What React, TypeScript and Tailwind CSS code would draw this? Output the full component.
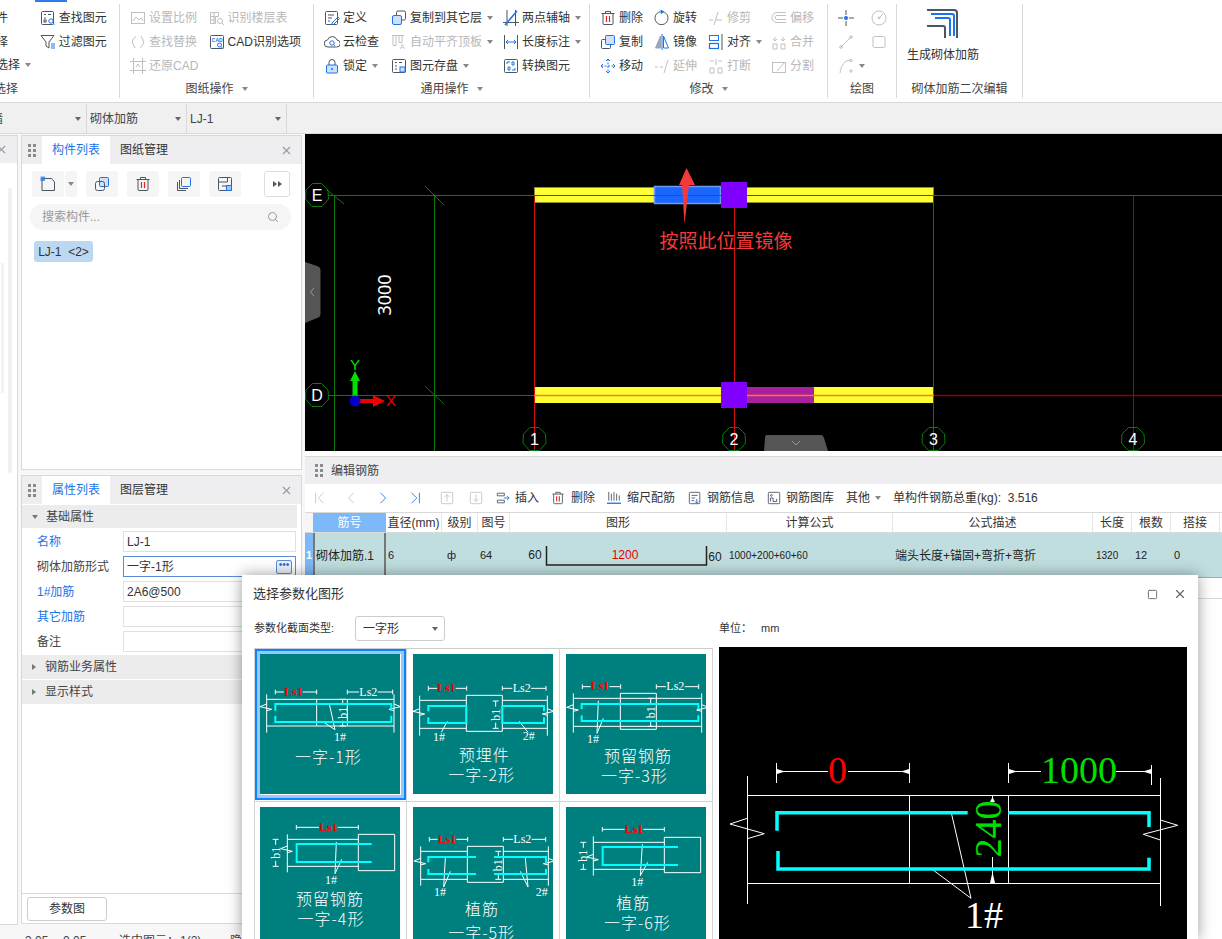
import React from 'react';
import { X, Search, Square } from 'lucide-react';

const B = '#1a73e8';

function Caret({ dark }: { dark?: boolean }) {
  return <span className={`inline-block w-0 h-0 border-x-[3px] border-x-transparent border-t-[4px] ${dark ? 'border-t-[#666]' : 'border-t-[#888]'}`} />;
}

function Svg({ children, s = 16 }: { children: React.ReactNode; s?: number }) {
  return (
    <svg width={s} height={s} viewBox="0 0 16 16" fill="none" stroke="currentColor" strokeWidth="1" className="shrink-0">
      {children}
    </svg>
  );
}

const icons: Record<string, React.ReactNode> = {
  find: <><rect x="1.5" y="1.5" width="12" height="13" rx="1" /><path d="M4 4.5h2M8 4.5h3M4 8h2" /><rect x="4" y="10" width="2" height="2" /><circle cx="11" cy="11" r="2.2" stroke={B} /><path d="M12.6 12.6l2 2" stroke={B} /></>,
  filter: <><path d="M1 1.5h13L9 8v6l-3-2V8z" /><path d="M11 10h4M11 12h4M11 14h4" stroke={B} /></>,
  scale: <><rect x="1.5" y="2.5" width="13" height="11" /><path d="M3 11l3-4 3 3 2-2 2 3" /></>,
  table: <><path d="M1.5 2.5h8v4h-3v7h-5zM5 2.5v11M1.5 6.5h5M1.5 10h5" /><circle cx="11" cy="11" r="2.5" /><path d="M13 13l2 2" /></>,
  replace: <><path d="M3 10a5.5 5.5 0 0 1 3-7.5M13 6a5.5 5.5 0 0 1-3 7.5" /><path d="M5 14l-2-4M11 2l2 4" /></>,
  cad: <><rect x="1.5" y="1.5" width="13" height="13" rx="1" /><text x="2.8" y="7.5" fontSize="5" fill={B} stroke="none" fontWeight="700">CAD</text><circle cx="10.5" cy="11" r="2" stroke={B} /><path d="M12 12.5l2 2" stroke={B} /></>,
  crop: <><path d="M3.5 0v16M12.5 0v16M0 3.5h16M0 12.5h16" /><path d="M6 9l2-3 2 3" /></>,
  define: <><rect x="1.5" y="1.5" width="12" height="13" rx="1" /><path d="M4 5h6M4 8h4M4 11h2" /><path d="M8 13l6-6 1.5 1.5-6 6H8z" stroke={B} /></>,
  cloud: <><path d="M4 13a3.5 3.5 0 0 1-.5-7 5 5 0 0 1 9.5 0 3.5 3.5 0 0 1-.5 7z" /><circle cx="8" cy="9" r="2.2" stroke={B} /><path d="M9.5 10.5l1.5 1.5" stroke={B} /></>,
  lock: <><path d="M5 7V4.5a3 3 0 0 1 6 0V7" /><rect x="2.5" y="7" width="11" height="8" rx="1" fill="#cfe0f8" stroke={B} /><circle cx="8" cy="11" r="1" fill={B} stroke="none" /></>,
  layer: <><rect x="5.5" y="1" width="9" height="9" rx="1.5" /><rect x="1.5" y="5.5" width="9" height="9" rx="1.5" fill="#cfe0f8" stroke={B} /></>,
  level: <><path d="M2 1.5v10h3v-10M8 1.5v7h3v-7M1 1.5h12" /><text x="9" y="15" fontSize="7" stroke="none" fill="currentColor">A</text></>,
  save: <><rect x="1.5" y="1.5" width="13" height="13" rx="1" /><path d="M4 4.5h2M8 4.5h3M4 8h2M4 11h2" /><rect x="9" y="9" width="5" height="5" fill="#cfe0f8" stroke={B} /></>,
  axis: <><path d="M4 0v16M0 12.5h16M12.5 0v16" /><path d="M2 15L14 1" stroke={B} strokeWidth="1.5" /></>,
  measure: <><path d="M1.5 1v14M14.5 1v14" /><path d="M3 8h10M5 6L3 8l2 2M11 6l2 2-2 2" stroke={B} /></>,
  convert: <><rect x="1.5" y="1.5" width="13" height="13" rx="1" /><path d="M4 6V4h3M12 10v2H9M5 9h2v3H5zM9 4h2v3H9z" stroke={B} /></>,
  del: <><path d="M1.5 3.5h13M5.5 3.5V1.5h5v2" /><path d="M3 3.5v10a1 1 0 0 0 1 1h8a1 1 0 0 0 1-1v-10" /><path d="M6.5 6v6M9.5 6v6" stroke="#e02020" strokeWidth="1.2" /></>,
  rotate: <><path d="M9 1.8a6.5 6.5 0 1 1-3 0" /><path d="M7 0l2.5 1.8L7 3.5z" fill={B} stroke={B} /></>,
  trim: <><path d="M1 10h4M8 10h6M10 2L6 15" /></>,
  offset: <><path d="M15 2.5H6a5 5 0 0 0 0 10h9" /><path d="M15 5.5H6a2 2 0 0 0 0 4h9" /></>,
  copy: <><rect x="5.5" y="1.5" width="9" height="9" rx="1" fill="#cfe0f8" stroke={B} /><path d="M5 5.5H2.5a1 1 0 0 0-1 1v7a1 1 0 0 0 1 1h7a1 1 0 0 0 1-1V11" /></>,
  mirror: <><path d="M6.5 2L1.5 14h5z" fill="#9aa6b8" stroke="#9aa6b8" /><path d="M9.5 2l5 12h-5z" stroke={B} /><path d="M8 0v16" stroke={B} /></>,
  align: <><rect x="1.5" y="1.5" width="9" height="5" stroke={B} /><rect x="1.5" y="9.5" width="9" height="5" stroke={B} strokeWidth="1.2" /><path d="M14 0v16" /></>,
  merge: <><path d="M2 10h4v5H2zM10 10h4v5h-4zM4 7V3M12 7V3M2 5l2 2 2-2M10 5l2 2 2-2" /></>,
  move: <><path d="M8 1v14M1 8h14" strokeDasharray="2 1.5" stroke={B} /><path d="M6 3l2-2 2 2M6 13l2 2 2-2M3 6L1 8l2 2M13 6l2 2-2 2" stroke={B} /></>,
  extend: <><path d="M1 9h3M6 9h3M14 2l-4 13" /></>,
  brk: <><path d="M2 10h4v5H2zM10 10h4v5h-4zM2 3h4M10 3h4M8 1v6" /></>,
  split: <><rect x="1.5" y="4.5" width="13" height="10" /><path d="M6 13l8-9" /></>,
  point: <><path d="M8 0v5M8 11v5M0 8h5M11 8h5" /><circle cx="8" cy="8" r="2" fill={B} stroke="none" /></>,
  circle: <><circle cx="8" cy="8" r="7" /><circle cx="8" cy="8" r="1" /><path d="M8.5 7.5L12 4" /></>,
  line: <><path d="M3 13L13 3" /><circle cx="3" cy="13" r="1.3" /><circle cx="13" cy="3" r="1.3" /></>,
  rect: <><rect x="2" y="2.5" width="12" height="11" rx="1.5" /></>,
  arc: <><path d="M2 15C3 7 7 2 13 2" /><circle cx="13" cy="2.5" r="1.2" /><circle cx="13" cy="13" r="1.2" /></>,
  newdoc: <><path d="M2 2.5h9.5L14.5 6v8.5h-12.5z" /><rect x="0.5" y="0.5" width="4.5" height="4.5" fill={B} stroke="none" opacity="0.7" /></>,
  copy2: <><rect x="5.5" y="1.5" width="9" height="9" rx="1" fill="#cfe0f8" stroke={B} /><rect x="1.5" y="5.5" width="9" height="9" rx="2" /></>,
  stack: <><rect x="5.5" y="1.5" width="9" height="9" rx="1" stroke={B} /><path d="M3.5 4v8.5H12M1.5 6v8.5H10" /></>,
  disk: <><rect x="1.5" y="1.5" width="13" height="13" rx="1" /><path d="M1.5 6h9M10.5 1.5V6M5 10h6" /><rect x="9.5" y="9.5" width="5" height="5" fill="#9fc3f2" stroke={B} /></>,
  first: <><path d="M3 2v12M12 2L6 8l6 6" /></>,
  prev: <><path d="M10 2L4 8l6 6" /></>,
  next: <><path d="M5 2l6 6-6 6" /></>,
  last: <><path d="M4 2l6 6-6 6M13 2v12" /></>,
  up: <><rect x="1.5" y="1.5" width="13" height="13" rx="1" /><path d="M8 12V4M5 7l3-3 3 3" /></>,
  down: <><rect x="1.5" y="1.5" width="13" height="13" rx="1" /><path d="M8 4v8M5 9l3 3 3-3" /></>,
  insert: <><path d="M1.5 2.5h8v3h-8zM1.5 10.5h8v3h-8z" /><path d="M9 8h6M12.5 5.5L15 8l-2.5 2.5" stroke={B} /></>,
  ruler: <><path d="M2 1v10M5 3v8M8 1v10M11 3v8M14 5v6" /><path d="M0 14h16" stroke={B} strokeWidth="1.5" /></>,
  info: <><rect x="1.5" y="1.5" width="12" height="13" rx="1" /><path d="M4 5h7M4 8h4M4 11h3" /><path d="M10 9v5M8 12l2 2 2-2" stroke={B} /></>,
  lib: <><rect x="1.5" y="1.5" width="13" height="13" rx="1" /><path d="M4 12V8h3v4M7 12h4V9" /><circle cx="5" cy="5" r="1" /></>,
};

function Tool({ icon, label, caret, off }: { icon: string; label?: string; caret?: boolean; off?: boolean }) {
  return (
    <div className={`flex items-center h-6 gap-[3px] text-xs whitespace-nowrap ${off ? 'text-[#b8b8b8]' : 'text-[#333]'}`}>
      <span className={off ? 'text-[#c0c0c0]' : 'text-[#4b5563]'}><Svg>{icons[icon]}</Svg></span>
      {label && <span>{label}</span>}
      {caret && <span className="ml-[2px] flex"><Caret /></span>}
    </div>
  );
}

function Group({ cls, label, caret, children }: { cls: string; label: string; caret?: boolean; children: React.ReactNode }) {
  return (
    <div className={`flex flex-col h-[94px] mt-[2px] border-r border-[#d9d9d9] ${cls}`}>
      <div className="h-[73px] pt-[2px] shrink-0">{children}</div>
      <div className="h-[24px] shrink-0 flex items-center justify-center gap-2 text-xs text-[#444]">
        <span>{label}</span>
        {caret && <Caret />}
      </div>
    </div>
  );
}

function Col({ w, children }: { w: string; children: React.ReactNode }) {
  return <div className={`flex flex-col ${w}`}>{children}</div>;
}

function Ribbon() {
  return (
    <div className="h-[102px] bg-white">
      <div className="h-[2px]"><div className="ml-[35px] w-[32px] h-[2px] bg-[#2b7de9]" /></div>
      <div className="flex">
        <div className="flex flex-col h-[94px] mt-[2px] w-[120px] border-r border-[#d9d9d9]">
          <div className="flex h-[73px] pt-[2px] shrink-0">
            <div className="w-[40px] flex flex-col text-xs text-[#333]">
              <div className="h-6 flex items-center -ml-[4px]">件</div>
              <div className="h-6 flex items-center -ml-[4px]">择</div>
              <div className="h-6 flex items-center -ml-[4px] gap-[5px]"><span>选择</span><Caret /></div>
            </div>
            <Col w="w-[80px]">
              <Tool icon="find" label="查找图元" />
              <Tool icon="filter" label="过滤图元" />
            </Col>
          </div>
          <div className="h-[24px] shrink-0 flex items-center -ml-[6px] text-xs text-[#444]">选择</div>
        </div>
        <Group cls="w-[194px]" label="图纸操作" caret>
          <div className="flex pl-[10px]">
            <Col w="w-[79px]">
              <Tool icon="scale" label="设置比例" off />
              <Tool icon="replace" label="查找替换" off />
              <Tool icon="crop" label="还原CAD" off />
            </Col>
            <Col w="w-[105px]">
              <Tool icon="table" label="识别楼层表" off />
              <Tool icon="cad" label="CAD识别选项" />
            </Col>
          </div>
        </Group>
        <Group cls="w-[276px]" label="通用操作" caret>
          <div className="flex pl-[10px]">
            <Col w="w-[67px]">
              <Tool icon="define" label="定义" />
              <Tool icon="cloud" label="云检查" />
              <Tool icon="lock" label="锁定" caret />
            </Col>
            <Col w="w-[112px]">
              <Tool icon="layer" label="复制到其它层" caret />
              <Tool icon="level" label="自动平齐顶板" caret off />
              <Tool icon="save" label="图元存盘" caret />
            </Col>
            <Col w="w-[85px]">
              <Tool icon="axis" label="两点辅轴" caret />
              <Tool icon="measure" label="长度标注" caret />
              <Tool icon="convert" label="转换图元" />
            </Col>
          </div>
        </Group>
        <Group cls="w-[238px]" label="修改" caret>
          <div className="flex pl-[10px]">
            <Col w="w-[54px]">
              <Tool icon="del" label="删除" />
              <Tool icon="copy" label="复制" />
              <Tool icon="move" label="移动" />
            </Col>
            <Col w="w-[54px]">
              <Tool icon="rotate" label="旋转" />
              <Tool icon="mirror" label="镜像" />
              <Tool icon="extend" label="延伸" off />
            </Col>
            <Col w="w-[63px]">
              <Tool icon="trim" label="修剪" off />
              <Tool icon="align" label="对齐" caret />
              <Tool icon="brk" label="打断" off />
            </Col>
            <Col w="w-[55px]">
              <Tool icon="offset" label="偏移" off />
              <Tool icon="merge" label="合并" off />
              <Tool icon="split" label="分割" off />
            </Col>
          </div>
        </Group>
        <Group cls="w-[69px]" label="绘图">
          <div className="flex pl-[10px]">
            <Col w="w-[33px]">
              <Tool icon="point" />
              <Tool icon="line" off />
              <Tool icon="arc" caret off />
            </Col>
            <Col w="w-[20px]">
              <Tool icon="circle" off />
              <Tool icon="rect" off />
            </Col>
          </div>
        </Group>
        <Group cls="w-[126px]" label="砌体加筋二次编辑">
          <div className="flex flex-col items-center w-[72px] ml-[10px]">
            <svg width="32" height="30" viewBox="0 0 32 30" fill="none" className="mt-[2px] shrink-0">
              <path d="M0 2h27a3 3 0 0 1 3 3v25" stroke="#4b5563" strokeWidth="2" />
              <path d="M4 6h21a2 2 0 0 1 2 2v20M8 10h13a2 2 0 0 1 2 2v16" stroke={B} strokeWidth="2" />
              <path d="M0 18h16a2 2 0 0 1 2 2v10" stroke="#4b5563" strokeWidth="2" />
            </svg>
            <div className="mt-[9px] text-xs text-[#333] whitespace-nowrap">生成砌体加筋</div>
          </div>
        </Group>
      </div>
    </div>
  );
}

function Toolbar() {
  return (
    <div className="h-[32px] pt-px flex bg-[#f0f0f0] border-y border-[#d9d9d9] text-xs text-[#444]">
      <div className="w-[87px] flex items-center justify-between pr-[5px] border-r border-[#d9d9d9]"><span className="-ml-[9px]">墙</span><Caret dark /></div>
      <div className="w-[100px] flex items-center justify-between pl-[3px] pr-[5px] border-r border-[#d9d9d9]"><span>砌体加筋</span><Caret dark /></div>
      <div className="w-[100px] flex items-center justify-between pl-[3px] pr-[5px] border-r border-[#d9d9d9]"><span>LJ-1</span><Caret dark /></div>
    </div>
  );
}

function Grip() {
  return (
    <div className="grid grid-cols-2 gap-[2px] w-[8px]">
      {[0, 1, 2, 3, 4, 5].map((i) => <span key={i} className="w-[3px] h-[3px] bg-[#8a8a8a]" />)}
    </div>
  );
}

function PanelHead({ a, b }: { a: string; b: string }) {
  return (
    <div className="h-[28px] flex items-stretch bg-[#eeeef0] text-xs">
      <div className="w-[20px] flex items-center justify-center"><Grip /></div>
      <div className="w-[68px] bg-white flex items-center justify-center text-[#1a73e8]">{a}</div>
      <div className="ml-[10px] flex items-center text-[#333]">{b}</div>
      <div className="ml-auto pr-[8px] flex items-center text-[#999]"><X size={13} /></div>
    </div>
  );
}

function SqBtn({ icon, cls }: { icon: string; cls: string }) {
  return <div className={`h-[26px] bg-[#f5f5f5] rounded-[3px] flex items-center justify-center text-[#4b5563] ${cls}`}><Svg>{icons[icon]}</Svg></div>;
}

function ListPanel() {
  return (
    <div className="h-[335px] mt-px border border-[#d9d9d9] bg-white">
      <PanelHead a="构件列表" b="图纸管理" />
      <div className="flex items-center mt-[7px] ml-[10px]">
        <SqBtn icon="newdoc" cls="w-[32px]" />
        <div className="ml-px w-[12px] h-[26px] bg-[#f5f5f5] rounded-[3px] flex items-center justify-center"><Caret /></div>
        <SqBtn icon="copy2" cls="w-[32px] ml-[9px]" />
        <SqBtn icon="del" cls="w-[32px] ml-[9px]" />
        <SqBtn icon="stack" cls="w-[32px] ml-[9px]" />
        <SqBtn icon="disk" cls="w-[32px] ml-[9px]" />
        <div className="w-[26px] h-[26px] ml-[23px] border border-[#ddd] rounded-[3px] flex items-center justify-center">
          <svg width="9" height="6" viewBox="0 0 9 6" fill="#555"><path d="M0 0l4 3-4 3zM5 0l4 3-4 3z" /></svg>
        </div>
      </div>
      <div className="mt-[7px] ml-[8px] w-[261px] h-[26px] rounded-full bg-[#f5f5f5] flex items-center justify-between px-[12px] text-xs text-[#999]">
        <span>搜索构件...</span>
        <Search size={12} />
      </div>
      <div className="mt-[11px] ml-[12px] w-[59px] h-[21px] rounded-[3px] bg-[#bcd7f2] flex items-center justify-center text-xs text-[#333] whitespace-pre">LJ-1  &lt;2&gt;</div>
    </div>
  );
}

function Section({ label, open }: { label: string; open?: boolean }) {
  return (
    <div className={`mb-px w-[275px] bg-[#ececec] flex items-center text-xs text-[#444] ${open ? 'h-[23px]' : 'h-[24px]'}`}>
      <span className={`ml-[10px] w-0 h-0 ${open ? 'border-x-[3px] border-x-transparent border-t-[4px] border-t-[#777]' : 'border-y-[3px] border-y-transparent border-l-[4px] border-l-[#777]'}`} />
      <span className={open ? 'ml-[8px]' : 'ml-[9px]'}>{label}</span>
    </div>
  );
}

function PropRow({ label, blue, value, active }: { label: string; blue?: boolean; value?: string; active?: boolean }) {
  return (
    <div className="h-[25px] w-[275px] flex items-center text-xs">
      <span className={`w-[101px] pl-[15px] ${blue ? 'text-[#1a73e8]' : 'text-[#444]'}`}>{label}</span>
      <div className={`w-[173px] h-[21px] flex items-center pl-[3px] pr-[3px] justify-between text-[#333] border ${active ? 'border-[#5b8bd8]' : 'border-[#e0e0e0]'}`}>
        <span>{value}</span>
        {active && <span className="w-[16px] h-[14px] rounded-[2px] border border-[#5b8bd8] bg-[#eaf2fc] text-[#2b6cc4] text-[10px] leading-[8px] flex justify-center">•••</span>}
      </div>
    </div>
  );
}

function PropPanel() {
  return (
    <div className="h-[449px] mt-[5px] border border-[#d9d9d9] bg-white flex flex-col">
      <PanelHead a="属性列表" b="图层管理" />
      <div className="mt-px">
        <Section label="基础属性" open />
        <PropRow label="名称" blue value="LJ-1" />
        <PropRow label="砌体加筋形式" value="一字-1形" active />
        <PropRow label="1#加筋" blue value="2A6@500" />
        <PropRow label="其它加筋" blue />
        <PropRow label="备注" />
        <div className="h-px" />
        <Section label="钢筋业务属性" />
        <Section label="显示样式" />
      </div>
      <div className="mt-auto h-[30px] border-t border-[#d9d9d9] flex items-start pt-[3px] pl-[5px]">
        <div className="w-[80px] h-[24px] border border-[#ccc] rounded-[3px] flex items-center justify-center text-xs text-[#333]">参数图</div>
      </div>
    </div>
  );
}

function LeftSide() {
  return (
    <div className="w-[305px] shrink-0 flex flex-col bg-[#f7f7f7]">
      <div className="flex h-[790px]">
        <div className="w-[18px] h-[790px] mt-px border-r border-b border-[#d9d9d9] bg-white flex flex-col">
          <div className="h-[28px] bg-[#eeeef0] border-t border-[#d9d9d9] flex items-center text-[#999] -ml-[5px]"><X size={13} className="shrink-0" /></div>
          <div className="flex gap-[4px] pl-px flex-1">
            <div className="w-[3px]"><div className="h-[130px] mt-[100px] bg-[#f3f3f3]" /></div>
            <div className="w-[4px] mt-[25px] h-[285px] bg-[#f0f0f0] rounded" />
          </div>
        </div>
        <div className="w-[281px] ml-[3px]">
          <ListPanel />
          <PropPanel />
        </div>
      </div>
      <div className="flex pt-[9px] pl-[25px] text-xs text-[#444] whitespace-nowrap">
        <span className="w-[38px]">3.05</span>
        <span className="w-[56px]">0.05</span>
        <span className="w-[61px]">选中图元：</span>
        <span className="w-[50px]">1(2)</span>
        <span>隐</span>
      </div>
    </div>
  );
}

function AxisMark({ x, y, s }: { x: number; y: number; s: string }) {
  return (
    <g>
      <polygon points={`${x - 4.5},${y - 11.5} ${x + 4.5},${y - 11.5} ${x + 11},${y - 5} ${x + 11.5},${y + 4} ${x + 5},${y + 11.5} ${x - 5},${y + 11.5} ${x - 11.5},${y + 4} ${x - 11},${y - 5}`} fill="none" stroke="#0a7a0a" />
      <text x={x} y={y + 6} textAnchor="middle" fontSize="16" fill="#fff" fontFamily="Liberation Sans">{s}</text>
    </g>
  );
}

function CadView() {
  return (
    <svg width="917" height="317" viewBox="0 0 917 317" className="block bg-black shrink-0">
      <path d="M29.5 61V317M129.5 61V317" stroke="#0a7a0a" />
      <path d="M23 61.5H229M23 261.5H229" stroke="#0a7a0a" />
      <path d="M22 56L39 70M120 52L139 71M120 252L139 270" stroke="#0a7a0a" />
      <rect x="229.5" y="53.5" width="399" height="15" fill="#ffff33" stroke="#8f8f2a" />
      <rect x="229" y="253" width="400" height="16" fill="#ffff33" />
      <rect x="349.5" y="52.5" width="66" height="17" fill="#1a66ff" stroke="#6f9cf0" strokeWidth="1.5" />
      <rect x="442" y="253" width="67" height="16" fill="#a81fa0" />
      <path d="M229.5 62V317M429.5 62V317M628.5 62V317" stroke="#d01010" />
      <path d="M828.5 62V317" stroke="#a80000" />
      <path d="M229 61.5H917" stroke="#e01010" />
      <path d="M629 261.5H917" stroke="#900000" strokeWidth="1.5" />
      <path d="M229 261.5H629" stroke="#ff7a1a" strokeWidth="1.5" />
      <rect x="416" y="48" width="26" height="26" fill="#8000ff" />
      <rect x="416" y="248" width="26" height="26" fill="#8000ff" />
      <polygon points="381.5,34 390,51 384,51 379.5,90 377,51 374,51" fill="#f33a3a" />
      <text x="421" y="114" textAnchor="middle" fontSize="19" fill="#f33a3a" fontFamily="Noto Sans CJK SC">按照此位置镜像</text>
      <text x="0" y="0" transform="translate(86 161) rotate(-90)" textAnchor="middle" fontSize="18" fill="#fff" fontFamily="Noto Sans">3000</text>
      <AxisMark x={12} y={61} s="E" />
      <AxisMark x={12} y={261} s="D" />
      <AxisMark x={229.5} y={305} s="1" />
      <AxisMark x={429} y={305} s="2" />
      <AxisMark x={628.5} y={305} s="3" />
      <AxisMark x={828} y={305} s="4" />
      <path d="M47.5 267V247H45L50 237L55 247H52.5V267z" fill="#00e000" />
      <path d="M50 265H68V261L80 267L68 273V269H50z" fill="#f00000" />
      <circle cx="50" cy="267" r="5.5" fill="#0000c8" />
      <text x="50" y="236" textAnchor="middle" fontSize="15" fill="#00e000" fontFamily="Liberation Sans">Y</text>
      <text x="86" y="272" textAnchor="middle" fontSize="15" fill="#f00000" fontFamily="Liberation Sans">X</text>
      <path d="M0 128L12 132Q15.5 133 15.5 136V180Q15.5 183 12 184L0 189z" fill="#555" />
      <path d="M9 154L5.5 158L9 162" stroke="#999" fill="none" />
      <path d="M462 301H516Q518 301 519 304L523 317H459L460 304Q460 301 462 301z" fill="#555" />
      <path d="M487 307L491 311L495 307" stroke="#999" fill="none" />
    </svg>
  );
}

function Nav({ icon, blue, off, cls }: { icon: string; blue?: boolean; off?: boolean; cls: string }) {
  return <span className={`${blue ? 'text-[#1a73e8]' : off ? 'text-[#c4c4c4]' : 'text-[#4b5563]'} ${cls}`}><Svg s={14}>{icons[icon]}</Svg></span>;
}

function RebarBar() {
  return (
    <div className="h-[28px] flex items-center text-xs text-[#333] whitespace-nowrap pl-[8px]">
      <Nav icon="first" off cls="" />
      <Nav icon="prev" off cls="ml-[18px]" />
      <Nav icon="next" blue cls="ml-[17px]" />
      <Nav icon="last" blue cls="ml-[18px]" />
      <Nav icon="up" off cls="ml-[18px]" />
      <Nav icon="down" off cls="ml-[15px]" />
      <Nav icon="insert" cls="ml-[13px]" />
      <span className="ml-[5px]">插入</span>
      <Nav icon="del" cls="ml-[12px]" />
      <span className="ml-[6px]">删除</span>
      <Nav icon="ruler" cls="ml-[12px]" />
      <span className="ml-[6px]">缩尺配筋</span>
      <Nav icon="info" cls="ml-[13px]" />
      <span className="ml-[5px]">钢筋信息</span>
      <Nav icon="lib" cls="ml-[12px]" />
      <span className="ml-[5px]">钢筋图库</span>
      <span className="ml-[12px]">其他</span>
      <span className="ml-[5px] flex"><Caret /></span>
      <span className="ml-[12px] whitespace-pre">单构件钢筋总重(kg):  3.516</span>
    </div>
  );
}

const cols = 'grid grid-cols-[8px_73px_56px_36px_32px_217px_166px_200px_39px_39px_49px_2px]';
const headCells = ['直径(mm)', '级别', '图号', '图形', '计算公式', '公式描述', '长度', '根数', '搭接'];

function RebarTable() {
  return (
    <div className="text-xs text-[#333]">
      <div className={`${cols} h-[21px] border-y border-[#d9d9d9]`}>
        <div className="bg-[#f5f5f5]" />
        <div className="bg-[#7db8f8] text-white flex items-center justify-center">筋号</div>
        {headCells.map((h) => <div key={h} className="flex items-center justify-center border-r border-[#e6e6e6] whitespace-nowrap">{h}</div>)}
        <div />
      </div>
      <div className={`${cols} h-[45px] bg-[#c0dedf] border-b border-[#aaa] text-[#222]`}>
        <div className="bg-[#7db8f8] text-white font-bold flex items-center justify-center text-[11px]">1</div>
        <div className="border-x-2 border-[#777] flex items-center pl-px whitespace-nowrap">砌体加筋.1</div>
        <div className="flex items-center pl-[2px] text-[11px]">6</div>
        <div className="flex items-center pl-[5px] text-[11px]">ф</div>
        <div className="flex items-center pl-[2px] text-[11px]">64</div>
        <div className="flex items-center">
          <svg width="217" height="45" viewBox="0 0 217 45" fill="none" className="shrink-0">
            <path d="M36.5 13V32H196.5V13" stroke="#222" strokeWidth="1.5" />
            <text x="25" y="26" textAnchor="middle" fontSize="12" fill="#222" stroke="none" fontFamily="Liberation Sans">60</text>
            <text x="115" y="26" textAnchor="middle" fontSize="12" fill="#e00000" stroke="none" fontFamily="Liberation Sans">1200</text>
            <text x="205" y="28" textAnchor="middle" fontSize="12" fill="#222" stroke="none" fontFamily="Liberation Sans">60</text>
          </svg>
        </div>
        <div className="flex items-center pl-[2px] text-[10px] whitespace-nowrap">1000+200+60+60</div>
        <div className="flex items-center pl-[2px] whitespace-nowrap">端头长度+锚固+弯折+弯折</div>
        <div className="flex items-center pl-[3px] text-[10px]">1320</div>
        <div className="flex items-center pl-[3px] text-[11px]">12</div>
        <div className="flex items-center pl-[3px] text-[11px]">0</div>
        <div />
      </div>
      <div className="h-[21px] border-b border-[#d9d9d9]" />
    </div>
  );
}

type T = { s: string; x: number; y: number; c?: string; r?: boolean; z?: number };

function dim(a: number, b: number, y: number, t: number) {
  return `M${a} ${y - 7}V${y + 7}M${a} ${y}H${t - 28}M${t + 28} ${y}H${b}M${b} ${y - 7}V${y + 7}`;
}
function bdim(x: number, a: number, b: number) {
  const m = (a + b) / 2;
  return `M${x - 9} ${a}H${x + 9}M${x} ${a}V${m - 24}M${x} ${m + 24}V${b}M${x - 9} ${b}H${x + 9}`;
}
function brk(x: number, y: number, d: number) {
  return `M${x} ${y - 8}L${x - 20 * d} ${y}L${x + 15 * d} ${y + 8}L${x} ${y + 12}`;
}

const thumbs: { w: string; c: string; t: T[] }[] = [
  {
    w: [dim(46, 170, 114, 100), dim(262, 398, 114, 325), 'M20 136H402M20 216H402M20 121V236M402 121V236M170 136V216M262 136V216', brk(20, 158, 1), brk(402, 158, -1), bdim(248, 136, 216), 'M208 150L225 227M190 204L225 227'].join(''),
    c: 'M46 170V150H394V170M46 185V204H394V185',
    t: [{ s: 'Ls1', x: 100, y: 113, c: '#ff0000' }, { s: 'Ls2', x: 325, y: 113 }, { s: 'b1', x: 248, y: 176, r: true }, { s: '1#', x: 240, y: 249 }, { s: '一字-1形', x: 205, y: 306, z: 48 }],
  },
  {
    w: [dim(46, 161, 103, 100), dim(268, 399, 103, 326), 'M20 139H160M20 223H160M268 139H403M268 223H403M160 124H268V232H160zM20 125V245M403 125V245', brk(20, 172, 1), brk(403, 172, -1), bdim(248, 141, 223), 'M103 202L85 235M319 202L345 235'].join(''),
    c: 'M46 172V156H160V207H46V190M393 172V156H268V207H393V190',
    t: [{ s: 'Ls1', x: 100, y: 102, c: '#ff0000' }, { s: 'Ls2', x: 326, y: 102 }, { s: 'b1', x: 250, y: 182, r: true }, { s: '1#', x: 78, y: 248 }, { s: '2#', x: 347, y: 245 }, { s: '预埋件', x: 214, y: 300, z: 48 }, { s: '一字-2形', x: 206, y: 360, z: 48 }],
  },
  {
    w: [dim(49, 164, 98, 102), dim(271, 398, 98, 328), 'M22 133H407M22 217H407M163 118H271V226H163zM22 118V236M407 118V236', brk(22, 160, 1), brk(407, 160, -1), bdim(254, 133, 217), 'M97 140L93 238M112 193L93 238'].join(''),
    c: 'M47 166V150H397V166M47 184V201H397V184',
    t: [{ s: 'Ls1', x: 102, y: 97, c: '#ff0000' }, { s: 'Ls2', x: 328, y: 97 }, { s: 'b1', x: 254, y: 175, r: true }, { s: '1#', x: 81, y: 256 }, { s: '预留钢筋', x: 216, y: 303, z: 48 }, { s: '一字-3形', x: 205, y: 363, z: 48 }],
  },
  {
    w: [dim(109, 295, 61, 205), 'M82 97H295M82 178H295M295 82H404V191H295zM82 82V196', brk(82, 125, 1), bdim(47, 97, 178), 'M229 105L225 200M245 157L225 200'].join(''),
    c: 'M335 111H110V165H335',
    t: [{ s: 'Ls1', x: 205, y: 60, c: '#ff0000' }, { s: 'b1', x: 47, y: 137, r: true }, { s: '1#', x: 213, y: 219 }, { s: '预留钢筋', x: 210, y: 274, z: 48 }, { s: '一字-4形', x: 213, y: 334, z: 48 }],
  },
  {
    w: [dim(49, 164, 97, 102), dim(271, 398, 97, 328), 'M23 133H163M23 217H163M271 133H406M271 217H406M163 118H271V226H163zM23 118V236M406 118V236', brk(23, 162, 1), brk(406, 162, -1), bdim(256, 133, 217), 'M97 153L92 240M112 193L92 240M337 153L345 240M322 193L345 240'].join(''),
    c: 'M189 150H46V166M46 186V201H189M243 150H399V166M399 186V201H243',
    t: [{ s: 'Ls1', x: 102, y: 96, c: '#ff0000' }, { s: 'Ls2', x: 328, y: 96 }, { s: 'b1', x: 256, y: 175, r: true }, { s: '1#', x: 81, y: 255 }, { s: '2#', x: 386, y: 255 }, { s: '植筋', x: 207, y: 304, z: 48 }, { s: '一字-5形', x: 206, y: 374, z: 48 }],
  },
  {
    w: [dim(109, 295, 67, 204), 'M82 106H295M82 187H295M295 91H404V197H295zM82 88V206', brk(82, 150, 1), bdim(52, 106, 187), 'M229 112L223 206M245 166L223 206'].join(''),
    c: 'M336 120H110V174H336',
    t: [{ s: 'Ls1', x: 204, y: 66, c: '#ff0000' }, { s: 'b1', x: 52, y: 146, r: true }, { s: '1#', x: 214, y: 225 }, { s: '植筋', x: 202, y: 284, z: 48 }, { s: '一字-6形', x: 214, y: 344, z: 48 }],
  },
];

function Thumb({ w, c, t }: { w: string; c: string; t: T[] }) {
  return (
    <svg width="140" height="140" viewBox="0 0 420 420" className="block bg-[#007f7f]">
      <path d={w} stroke="#fff" strokeWidth="3" fill="none" />
      <path d={c} stroke="#00ffff" strokeWidth="6" fill="none" />
      {t.map((i) => (
        <text
          key={i.s}
          x={i.x}
          y={i.y}
          transform={i.r ? `rotate(-90 ${i.x} ${i.y})` : undefined}
          textAnchor="middle"
          dominantBaseline="central"
          fontSize={i.z || 36}
          fontWeight={i.c ? 700 : i.z ? 300 : 400}
          letterSpacing={i.z ? 3 : 0}
          fill={i.c || '#fff'}
          fontFamily={i.z ? 'Noto Sans CJK SC' : 'Liberation Serif'}
        >
          {i.s}
        </text>
      ))}
    </svg>
  );
}

function ParamView() {
  return (
    <svg width="468" height="292" viewBox="0 0 468 292" className="block bg-black shrink-0 -mt-px">
      <path d="M28.5 148.5H441.5M28.5 236.5H441.5M28.5 129V257M441.5 131V259M190.5 148V236M289.5 148V236" stroke="#fff" />
      <path d="M57.5 116V136M190.5 116V136M289.5 116V136M432.5 118V138" stroke="#fff" />
      <path d="M57 124.5H109M129 124.5H190M289 124.5H322M397 124.5H432" stroke="#fff" />
      <path d="M58 122V127L66 124.5zM190 122V127L182 124.5zM290 122V127L298 124.5zM432 122V127L424 124.5z" fill="#fff" />
      <path d="M28.3 171.3L11 177L45.3 186.7L28.3 191.7M441.3 173L458.7 178.3L424.3 187.3L441.3 193" stroke="#fff" fill="none" />
      <path d="M232.3 165.7L252 251.3M212.7 222L252 251.3" stroke="#fff" />
      <path d="M273.5 149V155M273.5 210V236" stroke="#fff" />
      <path d="M271 236L276 236L273.5 225zM271 155H276L273.5 150z" fill="#fff" />
      <path d="M248.7 165.7H58V183.7M59 204V222H430V210.7M289.3 165.7H430V180" stroke="#00ffff" strokeWidth="3.5" fill="none" />
      <text x="118.5" y="136" textAnchor="middle" fontSize="38" fill="#ff0000" fontFamily="Liberation Serif">0</text>
      <text x="360" y="136" textAnchor="middle" fontSize="38" fill="#00e000" fontFamily="Liberation Serif">1000</text>
      <text x="0" y="0" transform="translate(282 182) rotate(-90)" textAnchor="middle" fontSize="38" fill="#00e000" fontFamily="Liberation Serif">240</text>
      <text x="265" y="281" textAnchor="middle" fontSize="38" fill="#fff" fontFamily="Liberation Serif">1#</text>
    </svg>
  );
}

function ParamDialog() {
  return (
    <div className="absolute left-[242px] top-[575px] w-[956px] h-[364px] bg-white shadow-[0_0_14px_rgba(0,0,0,0.4)] overflow-hidden text-[#333]">
      <div className="h-[38px] flex items-center justify-between pl-[11px] pr-[11px] text-[13px]">
        <span>选择参数化图形</span>
        <div className="flex items-center gap-[15px] text-[#666]"><Square size={11} /><X size={14} /></div>
      </div>
      <div className="flex items-center mt-[3px] h-[25px] text-[11px]">
        <span className="ml-[12px] w-[101px] whitespace-nowrap">参数化截面类型:</span>
        <div className="w-[90px] h-[25px] border border-[#ccc] rounded-[3px] flex items-center justify-between pl-[7px] pr-[6px] text-xs"><span>一字形</span><Caret dark /></div>
        <span className="ml-[274px]">单位：</span>
        <span className="ml-[9px]">mm</span>
      </div>
      <div className="flex mt-[7px]">
        <div className="ml-[12px] w-[459px] grid grid-cols-3 border-t border-[#ccc] content-start">
          {thumbs.map((t, i) => (
            <div key={i} className={`h-[153px] border-r border-b border-[#d4d4d4] ${i % 3 === 0 ? 'border-l' : ''} ${i === 0 ? 'p-0' : i % 3 === 0 ? 'pl-[5px] pt-[5px]' : 'pl-[6px] pt-[5px]'}`}>
              {i === 0 ? (
                <div className="w-[151px] h-[151px] border-2 border-[#0a84ff]">
                  <div className="w-[147px] h-[147px] border-[3px] border-[#9cc7fa]"><Thumb {...t} /></div>
                </div>
              ) : (
                <Thumb {...t} />
              )}
            </div>
          ))}
        </div>
        <div className="ml-[6px]"><ParamView /></div>
      </div>
    </div>
  );
}

export default function App() {
  return (
    <div className="relative w-[1222px] h-[939px] overflow-hidden bg-white font-['Liberation_Sans','Noto_Sans_CJK_SC',sans-serif]">
      <Ribbon />
      <Toolbar />
      <div className="flex h-[805px]">
        <LeftSide />
        <div className="flex-1 flex flex-col min-w-0">
          <CadView />
          <div className="h-[5px] bg-white" />
          <div className="h-[28px] flex items-center bg-[#eeeef0] border-t border-[#d9d9d9] text-xs text-[#444] pl-[10px] gap-[8px]"><Grip /><span>编辑钢筋</span></div>
          <RebarBar />
          <RebarTable />
        </div>
      </div>
      <ParamDialog />
    </div>
  );
}
